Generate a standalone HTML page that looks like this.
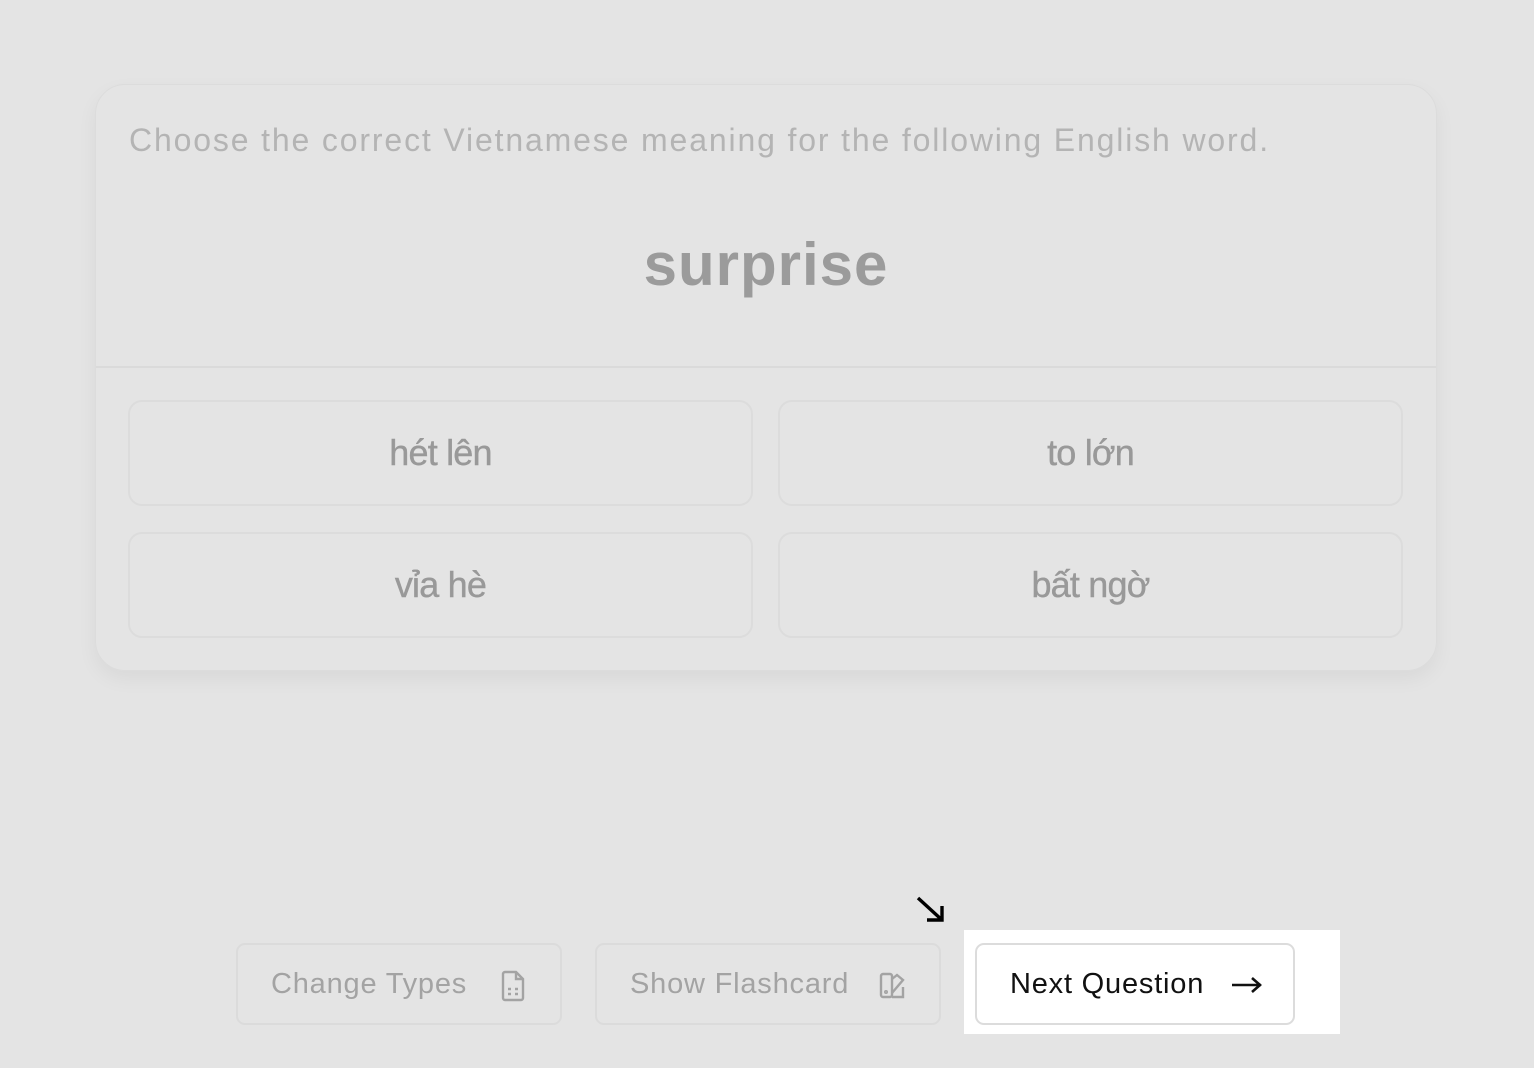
<!DOCTYPE html>
<html><head><meta charset="utf-8"><style>
*{box-sizing:border-box;margin:0;padding:0}
body{width:1534px;height:1068px;background:#e4e4e4;font-family:"Liberation Sans",sans-serif;position:relative;overflow:hidden}
.card{position:absolute;left:95px;top:84px;width:1342px;height:587px;border:1.5px solid #dcdcdc;border-radius:30px;box-shadow:0 8px 20px rgba(0,0,0,0.05)}
.q{position:absolute;left:33px;top:37px;font-size:32px;color:#b4b4b4;letter-spacing:1.85px;white-space:nowrap}
.w{position:absolute;left:0;width:100%;top:145px;text-align:center;font-size:60px;font-weight:bold;color:#9b9b9b;letter-spacing:1px}
.hr{position:absolute;left:0;right:0;top:281px;border-top:2px solid #dadada}
.opt{position:absolute;width:625px;height:106px;border:2px solid #dcdcdc;border-radius:14px;font-size:36px;color:#999;display:flex;align-items:center;justify-content:center;letter-spacing:-0.8px;-webkit-text-stroke:0.4px #999}
.btn{position:absolute;top:943px;height:82px;border:2px solid #dbdbdb;border-radius:9px;display:flex;align-items:center;font-size:29px;color:#a3a3a3;letter-spacing:0.8px}
</style></head><body>
<div class="card">
<div class="q">Choose the correct Vietnamese meaning for the following English word.</div>
<div class="w">surprise</div>
<div class="hr"></div>
</div>
<div class="opt" style="left:128px;top:400px">hét lên</div>
<div class="opt" style="left:778px;top:400px">to lớn</div>
<div class="opt" style="left:128px;top:532px">vỉa hè</div>
<div class="opt" style="left:778px;top:532px">bất ngờ</div>

<div class="btn" style="left:236px;width:326px;padding-left:33px">Change Types
<svg style="position:absolute;left:262px;top:25px" width="28" height="32" viewBox="0 0 28 32" fill="none" stroke="#a3a3a3" stroke-width="2.4"><path d="M5 2h11l7 7v19a2 2 0 0 1-2 2H5a2 2 0 0 1-2-2V4a2 2 0 0 1 2-2z"/><path d="M16 2v7h7"/><path d="M8 19h3M15 19h3M8 24h3M15 24h3"/></svg></div>
<div class="btn" style="left:595px;width:346px;padding-left:33px">Show Flashcard
<svg style="position:absolute;left:281px;top:26px" width="30" height="30" viewBox="0 0 30 30" fill="none" stroke="#a3a3a3" stroke-width="2.4"><rect x="3" y="3" width="11" height="23" rx="2"/><path d="M14 8l5-4 6 5-11 13"/><path d="M14 26h11V16"/><circle cx="8" cy="21" r="0.8"/></svg></div>

<div style="position:absolute;left:964px;top:930px;width:376px;height:104px;background:#fff"></div>
<div class="btn" style="left:975px;width:320px;padding-left:33px;color:#111;background:#fff;border-color:#dcdcdc">Next Question
<svg style="position:absolute;left:253px;top:30px" width="34" height="20" viewBox="0 0 34 20" fill="none" stroke="#111" stroke-width="2.6"><path d="M2 10h29M22 3l8 7-8 7"/></svg></div>
<svg style="position:absolute;left:914px;top:894px" width="34" height="32" viewBox="0 0 34 32" fill="none" stroke="#000" stroke-width="3.4"><path d="M4 4l24 22M28 12v14H13"/></svg>
</body></html>
